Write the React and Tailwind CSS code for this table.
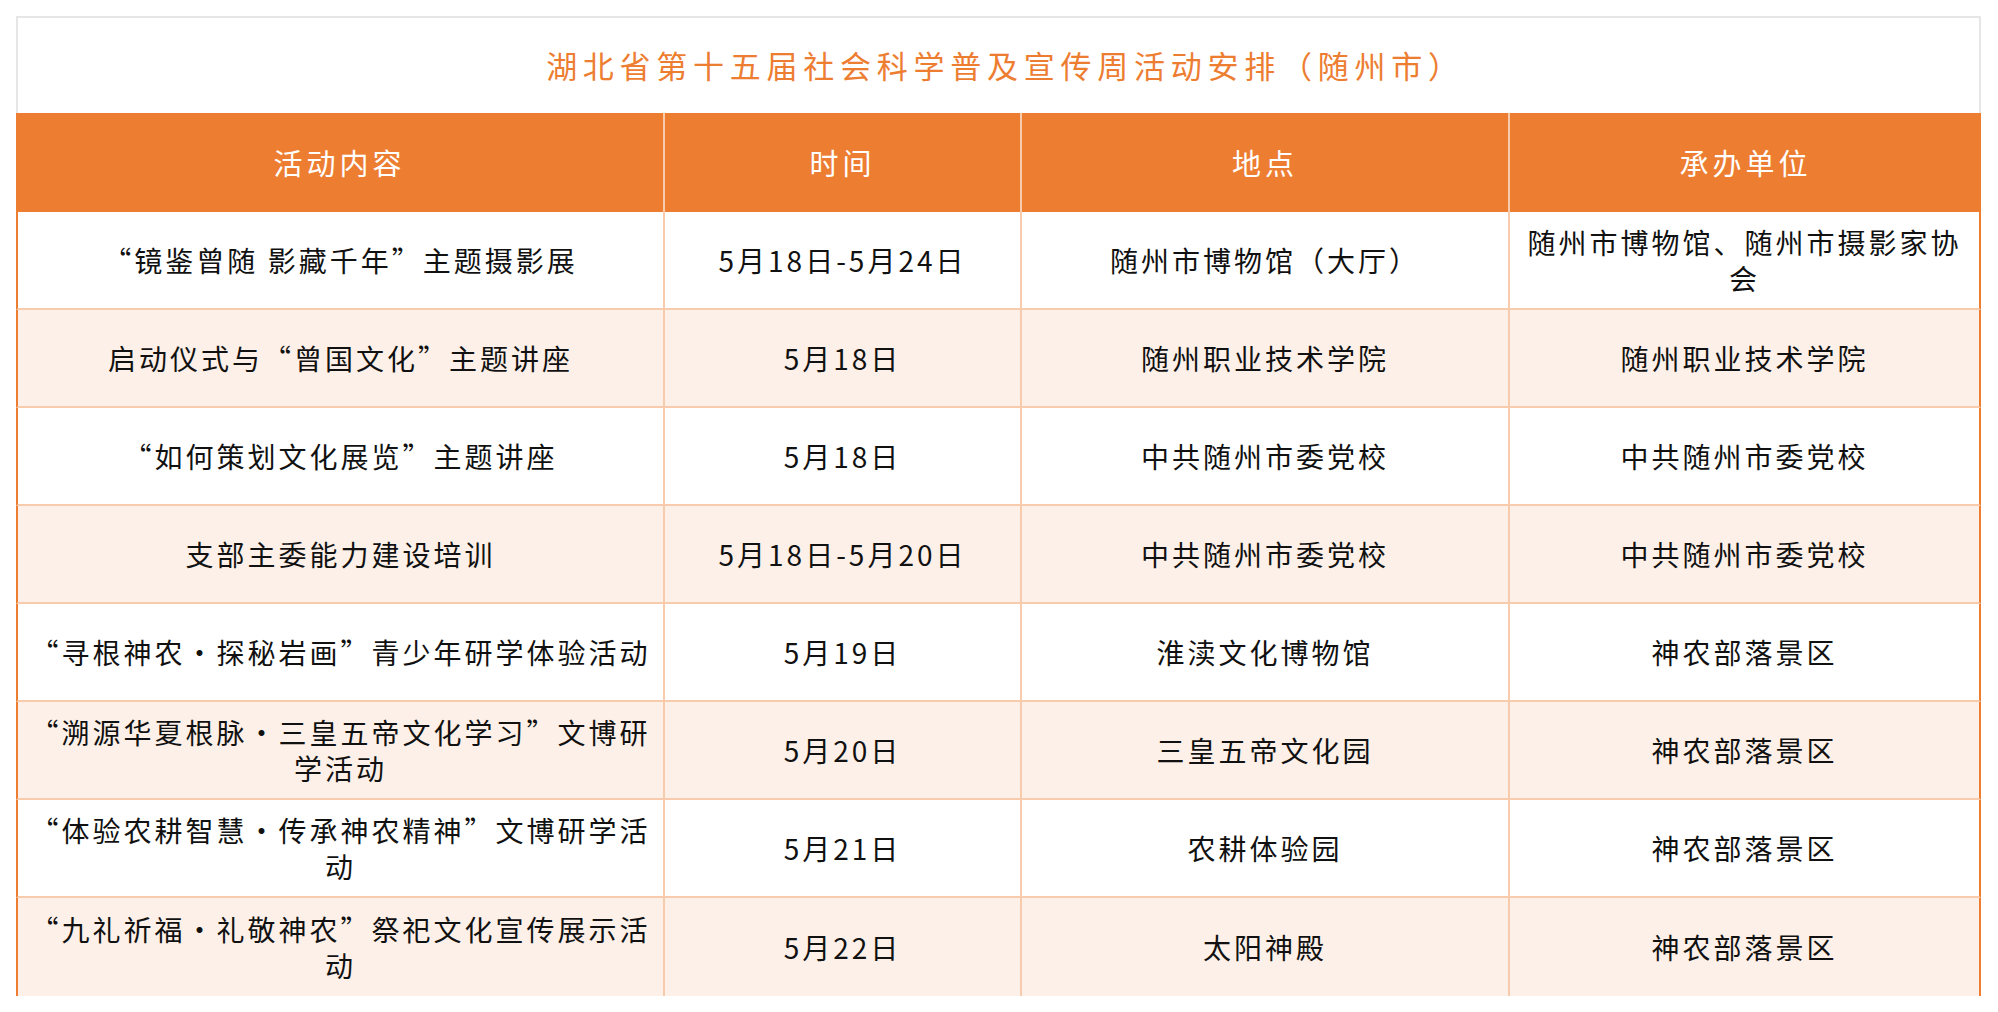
const rows = [
  {
    content: "“镜鉴曾随 影藏千年”主题摄影展",
    time: "5月18日-5月24日",
    place: "随州市博物馆（大厅）",
    org: "随州市博物馆、随州市摄影家协会",
  },
  {
    content: "启动仪式与“曾国文化”主题讲座",
    time: "5月18日",
    place: "随州职业技术学院",
    org: "随州职业技术学院",
  },
  {
    content: "“如何策划文化展览”主题讲座",
    time: "5月18日",
    place: "中共随州市委党校",
    org: "中共随州市委党校",
  },
  {
    content: "支部主委能力建设培训",
    time: "5月18日-5月20日",
    place: "中共随州市委党校",
    org: "中共随州市委党校",
  },
  {
    content: "“寻根神农·探秘岩画”青少年研学体验活动",
    time: "5月19日",
    place: "淮渎文化博物馆",
    org: "神农部落景区",
  },
  {
    content: "“溯源华夏根脉·三皇五帝文化学习”文博研学活动",
    time: "5月20日",
    place: "三皇五帝文化园",
    org: "神农部落景区",
  },
  {
    content: "“体验农耕智慧·传承神农精神”文博研学活动",
    time: "5月21日",
    place: "农耕体验园",
    org: "神农部落景区",
  },
  {
    content: "“九礼祈福·礼敬神农”祭祀文化宣传展示活动",
    time: "5月22日",
    place: "太阳神殿",
    org: "神农部落景区",
  },
];

const headers = ["活动内容", "时间", "地点", "承办单位"];

function Cell({ children, first, last, bottom }) {
  return (
    <div
      className={
        "flex items-center justify-center border-[#f8cbad] px-2 text-center " +
        (bottom ? "border-b-2 " : "") +
        (first ? "border-l-2 border-l-[#ed7d31] " : "") +
        (last ? "border-r-2 border-r-[#ed7d31]" : "border-r-2 border-r-[#f8cbad]")
      }
    >
      {children}
    </div>
  );
}

export default function App() {
  return (
    <div
      lang="zh-CN"
      className="min-h-[1012px] bg-white pl-[16px] pt-[16px] font-['Noto_Sans_CJK_SC',sans-serif]"
    >
      <div className="w-[1965px]">
        <div className="flex h-[97px] items-center justify-center border-x-2 border-t-2 border-[#e6e6e6] pl-[14px] text-[31px] tracking-[5.75px] text-[#ed7d31]">
          湖北省第十五届社会科学普及宣传周活动安排（随州市）
        </div>

        <div className="grid grid-cols-[649px_357px_488px_471px] bg-[#ed7d31]">
          {headers.map((h, i) => (
            <div
              key={h}
              className={
                "flex h-[99px] items-center justify-center text-[29px] tracking-[4px] text-white " +
                (i < 3 ? "border-r-2 border-[#f8cbad]" : "")
              }
            >
              {h}
            </div>
          ))}
        </div>

        {rows.map((row, i) => {
          const bottom = i < rows.length - 1;
          return (
            <div
              key={i}
              className={
                "grid h-[98px] grid-cols-[649px_357px_488px_471px] text-[28px] leading-[36px] tracking-[3px] text-[#111] " +
                (i % 2 === 1 ? "bg-[#fdf0e8]" : "bg-white")
              }
            >
              <Cell first bottom={bottom}>{row.content}</Cell>
              <Cell bottom={bottom}>{row.time}</Cell>
              <Cell bottom={bottom}>{row.place}</Cell>
              <Cell last bottom={bottom}>{row.org}</Cell>
            </div>
          );
        })}
      </div>
    </div>
  );
}
